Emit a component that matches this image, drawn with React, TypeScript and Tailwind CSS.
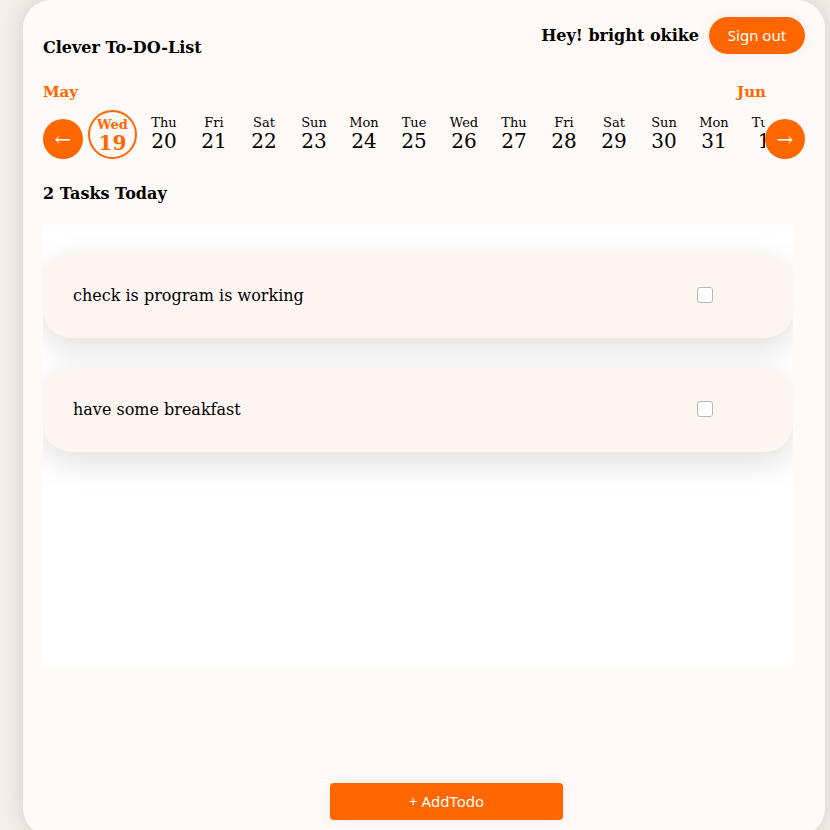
const days = [
  { name: "Wed", num: 19 },
  { name: "Thu", num: 20 },
  { name: "Fri", num: 21 },
  { name: "Sat", num: 22 },
  { name: "Sun", num: 23 },
  { name: "Mon", num: 24 },
  { name: "Tue", num: 25 },
  { name: "Wed", num: 26 },
  { name: "Thu", num: 27 },
  { name: "Fri", num: 28 },
  { name: "Sat", num: 29 },
  { name: "Sun", num: 30 },
  { name: "Mon", num: 31 },
  { name: "Tue", num: 1 },
  { name: "Wed", num: 2 },
];

const todos = ["check is program is working", "have some breakfast"];

const serif = { fontFamily: '"DejaVu Serif", serif' };

const App = () => {
  return (
    <div className="h-[830px] overflow-hidden bg-[#f4eeeb] pl-[23px] pr-[5px]">
      <div
        className="h-[836px] rounded-[28px] bg-[#fffaf7] px-5 pt-[17px] shadow-[0_0_22px_rgba(0,0,0,0.13)] flex flex-col"
        style={serif}
      >
        {/* header */}
        <div className="flex justify-between items-start">
          <h1 className="mt-[19px] text-[16px] leading-6 font-bold text-black">
            Clever To-DO-List
          </h1>
          <div className="flex items-center gap-[10px]">
            <span className="text-[16px] font-bold text-black">Hey! bright okike</span>
            <button
              className="h-[37px] w-[96px] rounded-full bg-[#ff6600] text-white text-[15px] shadow-[0_0_14px_rgba(0,0,0,0.06)]"
              style={{ fontFamily: '"Noto Sans", sans-serif' }}
            >
              Sign out
            </button>
          </div>
        </div>

        {/* months */}
        <div className="mt-[22px] flex justify-between pr-[39px] text-[15px] leading-5 font-bold text-[#ff6600]">
          <span>May</span>
          <span>Jun</span>
        </div>

        {/* date strip */}
        <div className="mt-[8px] flex items-end">
          <button className="w-10 h-10 shrink-0 rounded-full bg-[#ff6600] text-white text-[20px] leading-none">
            ←
          </button>
          <div className="ml-[5px] flex-1 overflow-hidden flex">
            {days.map((d, i) =>
              i === 0 ? (
                <div key={i} className="w-[51px] shrink-0 flex justify-start">
                  <div className="w-[49px] h-[49px] rounded-full border-2 border-[#ff6600] text-[#ff6600] font-bold flex flex-col items-center justify-center pt-[2px]">
                    <span className="text-[13px] leading-[14px]">{d.name}</span>
                    <span className="text-[20px] leading-[22px]">{d.num}</span>
                  </div>
                </div>
              ) : (
                <div
                  key={i}
                  className="w-[50px] h-[49px] shrink-0 flex flex-col items-center justify-center pb-[2px] text-black"
                >
                  <span className="text-[13px] leading-[14px]">{d.name}</span>
                  <span className="text-[20px] leading-[22px]">{d.num}</span>
                </div>
              )
            )}
          </div>
          <button className="w-10 h-10 shrink-0 rounded-full bg-[#ff6600] text-white text-[20px] leading-none">
            →
          </button>
        </div>

        <h2 className="mt-[23px] text-[16px] leading-6 font-bold text-black">2 Tasks Today</h2>

        {/* task list */}
        <div className="mt-[19px] mr-3 h-[443px] bg-white overflow-hidden pt-[29px] flex flex-col gap-[30px]">
          {todos.map((t) => (
            <div
              key={t}
              className="h-[84px] shrink-0 rounded-[28px] bg-[#fdf5f2] pl-[30px] pr-[80px] flex items-center justify-between shadow-[0_10px_32px_rgba(0,0,0,0.13)]"
            >
              <span className="text-[16px] text-black">{t}</span>
              <input
                type="checkbox"
                className="appearance-none w-4 h-4 mb-[2px] rounded-[3px] border border-[#b8b8b8] bg-white"
              />
            </div>
          ))}
        </div>

        <div className="mt-[115px]">
          <button
            className="ml-[287px] h-[37px] w-[233px] rounded bg-[#ff6600] text-white text-[15px] shadow-[0_0_12px_rgba(0,0,0,0.06)]"
            style={{ fontFamily: '"Noto Sans", sans-serif' }}
          >
            + AddTodo
          </button>
        </div>
      </div>
    </div>
  );
};

export default App;
